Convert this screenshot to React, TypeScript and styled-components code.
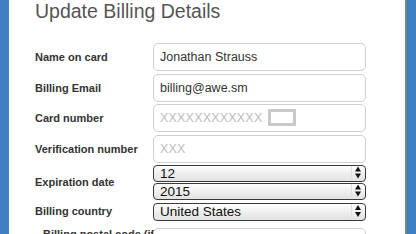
import React from "react";
import styled, { createGlobalStyle } from "styled-components";

const Global = createGlobalStyle`
  html, body { margin: 0; padding: 0; background: #3c7fc3; }
  body { font-family: "Liberation Sans", Arial, sans-serif; }
  * { box-sizing: border-box; }
`;

const Page = styled.div`
  width: 416px;
  height: 234px;
  overflow: hidden;
  background: #3c7fc3;
  padding: 0 9px;
  display: flex;
`;

const Modal = styled.div`
  flex: 1;
  background: #fff;
  border-right: 2px solid #7d7f82;
  padding: 2px 0 0 26px;
`;

const Title = styled.h1`
  margin: 0 0 21.5px 0;
  font-family: "Liberation Sans", Arial, sans-serif;
  font-weight: 400;
  font-size: 19.5px;
  line-height: 19.5px;
  color: #555;
`;

const Form = styled.div`
  display: flex;
  flex-direction: column;
`;

const Row = styled.div<{ $gap?: number }>`
  display: grid;
  grid-template-columns: 118px 213px;
  align-items: center;
  margin-top: ${(p) => p.$gap ?? 0}px;
`;

const Label = styled.label<{ $indent?: number; $top?: boolean }>`
  font-size: 11px;
  font-weight: 700;
  color: #333;
  white-space: nowrap;
  padding-left: ${(p) => p.$indent ?? 0}px;
  align-self: ${(p) => (p.$top ? "start" : "center")};
`;

const Field = styled.div`
  position: relative;
  display: flex;
  flex-direction: column;
  gap: 1px;
`;

const Input = styled.input`
  width: 213px;
  height: 28px;
  border: 1px solid #cfcfcf;
  border-radius: 5px;
  padding: 0 6px;
  font-family: "Liberation Sans", Arial, sans-serif;
  font-size: 12.5px;
  color: #333;
  background: #fff;
  outline: none;
  &::placeholder { color: #bdbdbd; letter-spacing: 0.2px; }
`;

const CardBadge = styled.span`
  position: absolute;
  left: 115px;
  top: 5px;
  width: 28px;
  height: 17px;
  border: 3px solid #c9c9c9;
  background: #fff;
`;

const SelectWrap = styled.div<{ $h: number }>`
  position: relative;
  width: 213px;
  height: ${(p) => p.$h}px;
`;

const Select = styled.select`
  appearance: none;
  -webkit-appearance: none;
  width: 100%;
  height: 100%;
  border: 1px solid #3a3a3a;
  border-bottom-width: 1.5px;
  border-radius: 4px;
  background: linear-gradient(#fefefe, #ececec 60%, #e2e2e2);
  padding: 0 6px;
  font-family: "Liberation Sans", Arial, sans-serif;
  font-size: 13.5px;
  color: #111;
  outline: none;
`;

const Arrows = styled.svg`
  position: absolute;
  right: 1px;
  top: 0;
  height: 100%;
  width: 14px;
  pointer-events: none;
`;

const SelectBox: React.FC<{ h: number; value: string; options: string[] }> = ({ h, value, options }) => (
  <SelectWrap $h={h}>
    <Select defaultValue={value}>
      {options.map((o) => (
        <option key={o}>{o}</option>
      ))}
    </Select>
    <Arrows viewBox={`0 0 14 ${h}`}>
      <line x1="0.5" y1="2" x2="0.5" y2={h - 2} stroke="#e0e0e0" strokeWidth="1" />
      <polygon points={`4,${h / 2 - 1} 10,${h / 2 - 1} 7,${h / 2 - 6}`} fill="#111" />
      <polygon points={`4,${h / 2 + 1} 10,${h / 2 + 1} 7,${h / 2 + 6}`} fill="#111" />
    </Arrows>
  </SelectWrap>
);

export default function App() {
  return (
    <>
      <Global />
      <Page>
        <Modal>
          <Title>Update Billing Details</Title>
          <Form>
            <Row>
              <Label>Name on card</Label>
              <Input defaultValue="Jonathan Strauss" />
            </Row>
            <Row $gap={2.5}>
              <Label>Billing Email</Label>
              <Input defaultValue="billing@awe.sm" />
            </Row>
            <Row $gap={2.5}>
              <Label>Card number</Label>
              <Field>
                <Input placeholder="XXXXXXXXXXXX" />
                <CardBadge />
              </Field>
            </Row>
            <Row $gap={2.5}>
              <Label>Verification number</Label>
              <Input placeholder="XXX" />
            </Row>
            <Row $gap={1.5}>
              <Label>Expiration date</Label>
              <Field>
                <SelectBox h={17} value="12" options={["01","02","03","04","05","06","07","08","09","10","11","12"]} />
                <SelectBox h={17} value="2015" options={["2013","2014","2015","2016","2017"]} />
              </Field>
            </Row>
            <Row $gap={3}>
              <Label>Billing country</Label>
              <SelectBox h={18} value="United States" options={["United States","Canada","United Kingdom"]} />
            </Row>
            <Row $gap={8}>
              <Label $indent={8} $top>Billing postal code (if applicable)</Label>
              <Input />
            </Row>
          </Form>
        </Modal>
      </Page>
    </>
  );
}
